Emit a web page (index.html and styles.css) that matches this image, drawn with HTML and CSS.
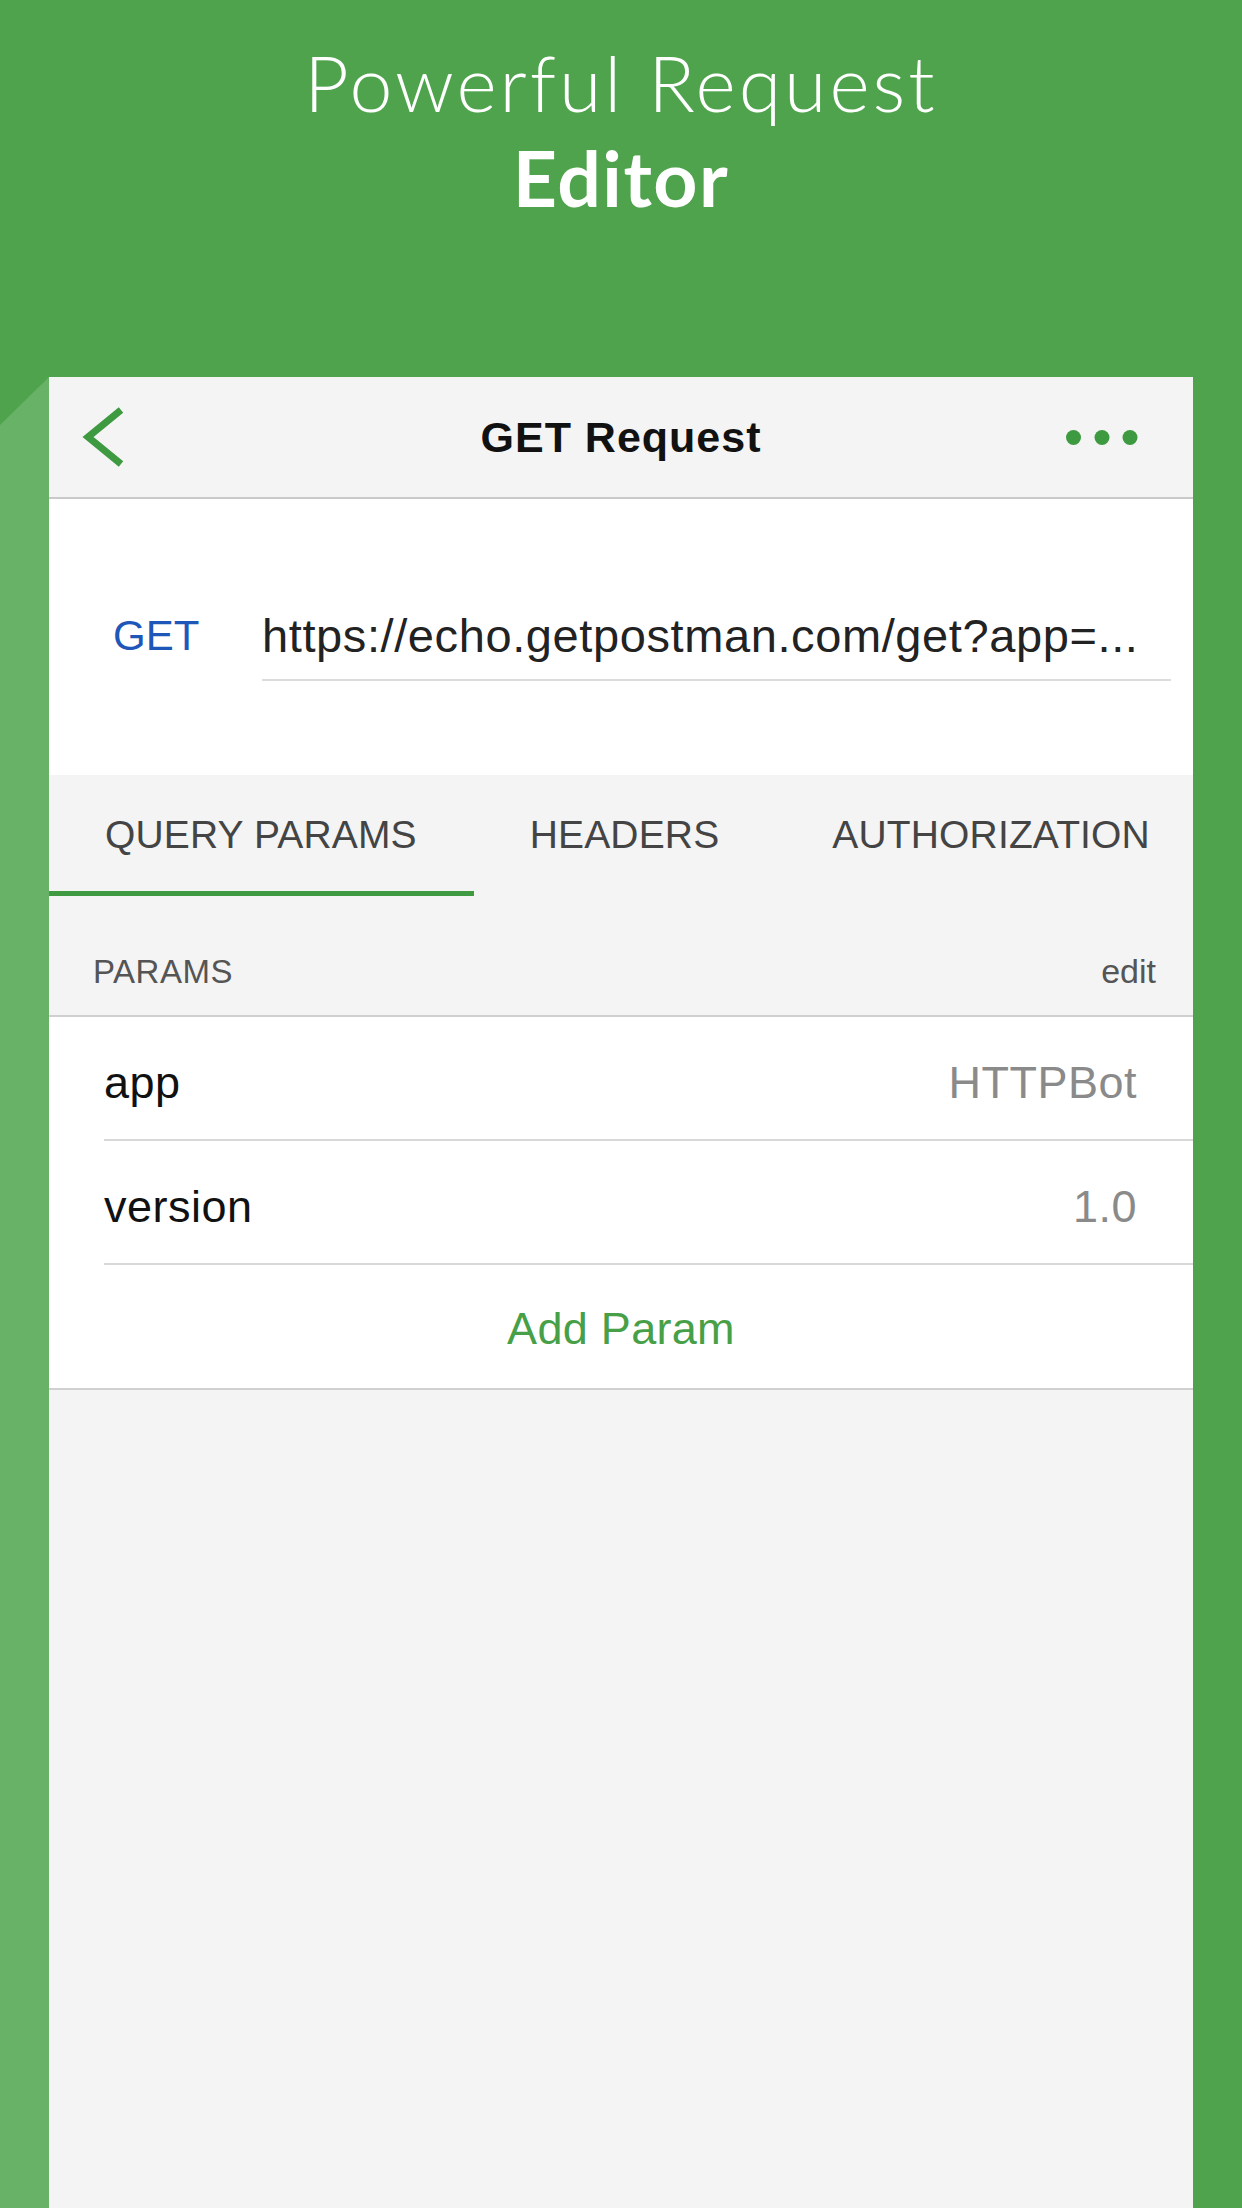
FILE: index.html
```html
<!DOCTYPE html>
<html lang="en">
<head>
  <meta charset="UTF-8">
  <title>Powerful Request Editor</title>
  <link rel="stylesheet" href="styles.css">
</head>
<body>

  <header class="hero">
    <div class="hero-light">Powerful Request</div>
    <div class="hero-bold">Editor</div>
  </header>

  <div class="stage">
    <div class="edge"></div>

    <div class="phone">
      <!-- barre de navigation -->
      <div class="nav">
        <svg class="back" width="45" height="66" viewBox="0 0 45 66">
          <polyline points="39,6 6,33 39,60" fill="none" stroke="#3d9a40" stroke-width="7" />
        </svg>
        <div class="nav-title">GET Request</div>
        <svg class="more" width="72" height="15" viewBox="0 0 72 15">
          <circle cx="7.5" cy="7.5" r="7.5" fill="#3d9a40" />
          <circle cx="36" cy="7.5" r="7.5" fill="#3d9a40" />
          <circle cx="64" cy="7.5" r="7.5" fill="#3d9a40" />
        </svg>
      </div>

      <!-- url -->
      <div class="url-box">
        <div class="method">GET</div>
        <div class="url-field">https://echo.getpostman.com/get?app=...</div>
      </div>

      <!-- onglets -->
      <div class="tabs">
        <div class="tab active">QUERY PARAMS</div>
        <div class="tab">HEADERS</div>
        <div class="tab">AUTHORIZATION</div>
      </div>

      <div class="section-head">
        <span>PARAMS</span>
        <span class="edit">edit</span>
      </div>

      <div class="params">
        <div class="param-row">
          <span class="key">app</span>
          <span class="value">HTTPBot</span>
        </div>
        <div class="param-row">
          <span class="key">version</span>
          <span class="value">1.0</span>
        </div>
        <div class="add-param">Add Param</div>
      </div>
    </div>
  </div>

</body>
</html>
```

FILE: styles.css
```css
body {
  margin: 0;
  width: 1242px;
  height: 2208px;
  overflow: hidden;
  background-color: #4ea34c;
  font-family: "Liberation Sans", Arial, sans-serif;
}

.hero {
  height: 377px;
  box-sizing: border-box;
  padding-top: 35px;
  text-align: center;
  color: #fff;
  font-family: Lato, "Open Sans", sans-serif;
  font-size: 77px;
  line-height: 95px;
}

.hero-light {
  font-weight: 300;
  letter-spacing: 3px;
}

.hero-bold {
  font-weight: 700;
  letter-spacing: 1.5px;
}

.stage {
  display: flex;
  height: 1831px;
}

.edge {
  width: 49px;
  background-color: #67b266;
  clip-path: polygon(100% 0, 100% 100%, 0 100%, 0 48px);
}

.phone {
  width: 1144px;
  background-color: #f4f4f4;
  overflow: hidden;
}

.nav {
  height: 120px;
  border-bottom: 2px solid #c9c9c9;
  display: grid;
  grid-template-columns: 1fr auto 1fr;
  align-items: center;
  padding: 0 44px;
}

.back {
  display: block;
  margin-left: -11px;
}

.more {
  display: block;
  justify-self: end;
  margin-right: 11px;
}

.nav-title {
  font-size: 43px;
  font-weight: bold;
  letter-spacing: 1px;
  color: #111;
}

.url-box {
  background-color: #fff;
  padding: 111px 22px 94px 64px;
  display: flex;
  align-items: flex-end;
}

.method {
  width: 149px;
  font-size: 42px;
  line-height: 52px;
  padding-bottom: 19px;
  color: #1f57b9;
}

.url-field {
  flex: 1;
  font-size: 47px;
  letter-spacing: 0.6px;
  line-height: 52px;
  padding-bottom: 17px;
  border-bottom: 2px solid #dcdcdc;
  color: #222;
  white-space: nowrap;
}

.tabs {
  display: flex;
  height: 121px;
}

.tab {
  box-sizing: border-box;
  height: 121px;
  padding: 37px 57px 0 56px;
  font-size: 39px;
  letter-spacing: 0.15px;
  line-height: 45px;
  color: #444;
  white-space: nowrap;
  flex-shrink: 0;
  border-bottom: 5px solid transparent;
}

.tab.active {
  border-bottom-color: #3f9a42;
}

.section-head {
  height: 121px;
  box-sizing: border-box;
  border-bottom: 2px solid #d0d0d0;
  display: flex;
  justify-content: space-between;
  align-items: flex-end;
  padding: 0 37px 25px 44px;
  font-size: 33px;
  letter-spacing: 0.5px;
  line-height: 37px;
  color: #555;
}

.edit {
  font-size: 34px;
  letter-spacing: 0;
}

.params {
  background-color: #fff;
  border-bottom: 2px solid #d0d0d0;
}

.param-row {
  height: 124px;
  box-sizing: border-box;
  margin-left: 55px;
  padding: 10px 56px 0 0;
  border-bottom: 2px solid #d8d8d8;
  display: flex;
  justify-content: space-between;
  align-items: center;
  font-size: 45px;
  letter-spacing: 0.5px;
}

.key {
  color: #111;
}

.value {
  color: #8a8a8a;
}

.add-param {
  height: 123px;
  box-sizing: border-box;
  padding-top: 5px;
  display: flex;
  align-items: center;
  justify-content: center;
  font-size: 45px;
  letter-spacing: 0.3px;
  color: #47a047;
}
```
